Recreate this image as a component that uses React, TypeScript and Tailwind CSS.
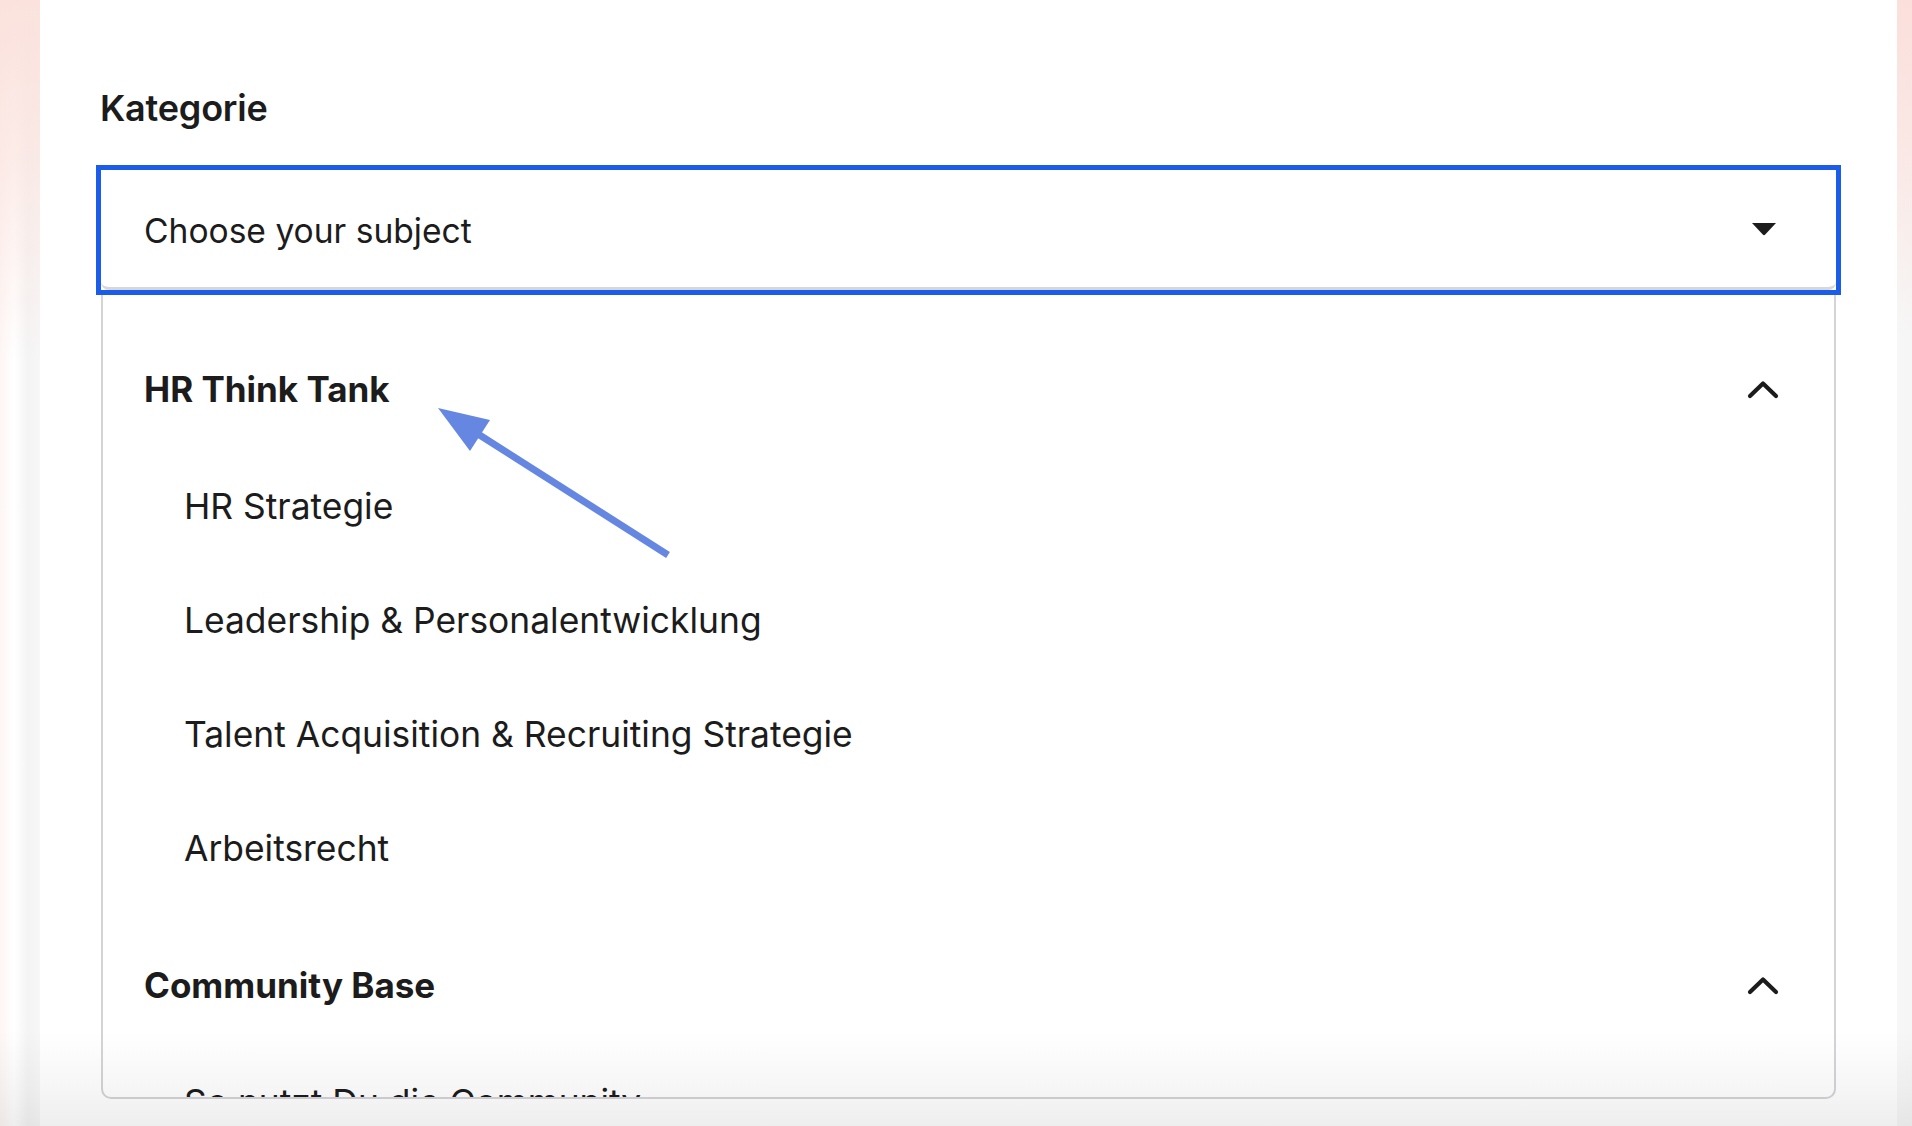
import React from "react";

const groups = [
  {
    title: "HR Think Tank",
    items: [
      "HR Strategie",
      "Leadership & Personalentwicklung",
      "Talent Acquisition & Recruiting Strategie",
      "Arbeitsrecht",
    ],
  },
  {
    title: "Community Base",
    items: ["So nutzt Du die Community", "Events & Networking"],
  },
];

function ChevronUp() {
  return (
    <svg width="32" height="20" viewBox="0 0 32 20" fill="none">
      <path
        d="M3 17 L16 4.5 L29 17"
        stroke="#1c1c1c"
        strokeWidth="4.2"
        strokeLinecap="round"
        strokeLinejoin="round"
      />
    </svg>
  );
}

function CaretDown() {
  return (
    <svg width="26" height="14" viewBox="0 0 26 14">
      <path d="M1 1 L25 1 L14.2 12.6 Q13 13.8 11.8 12.6 Z" fill="#1c1c1c" />
    </svg>
  );
}

export default function App() {
  return (
    <div
      className="relative flex h-[1126px] w-[1912px] overflow-hidden bg-white text-[#1c1c1c]"
      style={{ fontFamily: "Inter, 'Noto Sans', sans-serif" }}
    >
      {/* left edge */}
      <div className="w-[40px] bg-[linear-gradient(to_bottom,rgba(251,226,221,1)_0%,rgba(251,228,223,0.7)_14%,rgba(251,228,223,0)_32%),linear-gradient(to_right,#fdf6f5_0%,#ffffff_35%,#f4f4f4_70%,#f7f7f7_100%)]" />

      {/* main */}
      <div className="flex flex-1 flex-col px-[56px] pt-[86px]">
        <div className="pl-[4px] text-[36px] font-semibold leading-[44px] tracking-[-0.2px]">
          Kategorie
        </div>

        <div className="mt-[35px] border-[5px] border-[#1b5ce9]">
          <div className="flex h-[120px] items-center justify-between rounded-[8px] border-b-[3px] border-[#d6d6db] bg-white pl-[43px] pr-[59px]">
            <span className="mt-[5px] text-[33.6px] leading-none">Choose your subject</span>
            <CaretDown />
          </div>
        </div>

        <div className="mx-[5px] flex-1 overflow-hidden">
          <div className="h-[804px] overflow-hidden rounded-b-[10px] border-x-2 border-b-2 border-[#d4d4d8] bg-white pt-[33px]">
            <div className="flex flex-col gap-[18px]">
              {groups.map((g) => (
                <div key={g.title} className="flex flex-col">
                  <div className="flex h-[122px] items-center justify-between pl-[41px] pr-[55px]">
                    <span className="text-[35px] font-bold leading-none">
                      {g.title}
                    </span>
                    <ChevronUp />
                  </div>
                  {g.items.map((it) => (
                    <div
                      key={it}
                      className="flex h-[114px] items-center pl-[81px] text-[35.4px] leading-none"
                    >
                      {it}
                    </div>
                  ))}
                </div>
              ))}
            </div>
          </div>
        </div>
      </div>

      {/* right edge */}
      <div className="w-[15px] bg-[linear-gradient(to_bottom,rgba(251,223,219,1)_0%,rgba(251,228,224,0.7)_15%,rgba(251,228,224,0)_30%),linear-gradient(to_right,#f7f7f7,#f6f6f6)]" />

      {/* bottom shade */}
      <div className="pointer-events-none absolute bottom-0 left-0 h-[96px] w-full bg-[linear-gradient(to_bottom,rgba(0,0,0,0)_0%,rgba(0,0,0,0.035)_60%,rgba(0,0,0,0.065)_100%)]" />

      {/* annotation arrow */}
      <svg
        className="pointer-events-none absolute left-0 top-0"
        width="1912"
        height="1126"
        viewBox="0 0 1912 1126"
      >
        <line x1="478" y1="434" x2="668" y2="555" stroke="#6587e2" strokeWidth="7" />
        <polygon points="438,408 490,420 470,451" fill="#6587e2" />
      </svg>
    </div>
  );
}
